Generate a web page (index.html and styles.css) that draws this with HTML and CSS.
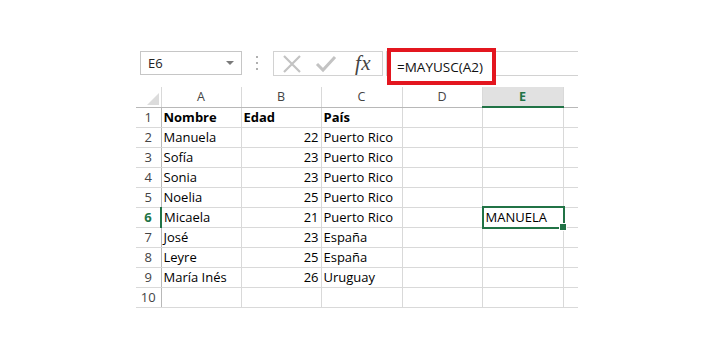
FILE: index.html
```html
<!DOCTYPE html>
<html lang="es">
<head>
  <meta charset="UTF-8" />
  <title>MAYUSC</title>
  <link rel="stylesheet" href="styles.css">
</head>
<body>
  <div class="sheet">
    <div class="toolbar">
      <div class="namebox">
        <span>E6</span>
        <span class="caret"></span>
      </div>
      <div class="grip"><i></i><i></i><i></i></div>
      <div class="fxbox">
        <svg class="ico" width="20" height="20" viewBox="0 0 20 20">
          <path d="M2 2 L18 18 M18 2 L2 18" stroke="#c3c3c3" stroke-width="2.2" fill="none" />
        </svg>
        <svg class="ico" width="22" height="20" viewBox="0 0 22 20">
          <path d="M2 10 L8 16 L20 3" stroke="#c3c3c3" stroke-width="3" fill="none" />
        </svg>
        <span class="fx">fx</span>
      </div>
      <div class="formula">
        <span class="formula-text">=MAYUSC(A2)</span>
      </div>
    </div>

    <table class="grid">
      <colgroup>
        <col class="c-hdr"><col class="c-80"><col class="c-80"><col class="c-81"><col class="c-80"><col class="c-81"><col class="c-rest">
      </colgroup>
      <thead>
        <tr>
          <th class="corner"><span class="tri"></span></th>
          <th>A</th><th>B</th><th>C</th><th>D</th><th class="active">E</th><th class="rest"></th>
        </tr>
      </thead>
      <tbody>
        <tr class="bold"><th>1</th><td>Nombre</td><td>Edad</td><td>País</td><td></td><td></td><td class="rest"></td></tr>
        <tr><th>2</th><td>Manuela</td><td class="num">22</td><td>Puerto Rico</td><td></td><td></td><td class="rest"></td></tr>
        <tr><th>3</th><td>Sofía</td><td class="num">23</td><td>Puerto Rico</td><td></td><td></td><td class="rest"></td></tr>
        <tr><th>4</th><td>Sonia</td><td class="num">23</td><td>Puerto Rico</td><td></td><td></td><td class="rest"></td></tr>
        <tr><th>5</th><td>Noelia</td><td class="num">25</td><td>Puerto Rico</td><td></td><td></td><td class="rest"></td></tr>
        <tr><th class="active">6</th><td>Micaela</td><td class="num">21</td><td>Puerto Rico</td><td></td><td class="sel">MANUELA</td><td class="rest"></td></tr>
        <tr><th>7</th><td>José</td><td class="num">23</td><td>España</td><td></td><td></td><td class="rest"></td></tr>
        <tr><th>8</th><td>Leyre</td><td class="num">25</td><td>España</td><td></td><td></td><td class="rest"></td></tr>
        <tr><th>9</th><td>María Inés</td><td class="num">26</td><td>Uruguay</td><td></td><td></td><td class="rest"></td></tr>
        <tr><th>10</th><td></td><td></td><td></td><td></td><td></td><td class="rest"></td></tr>
      </tbody>
    </table>
  </div>
</body>
</html>
```

FILE: styles.css
```css
* {
  box-sizing: border-box;
}

body {
  margin: 0;
  background: #ffffff;
  font-family: "Open Sans", "Liberation Sans", sans-serif;
  color: #000;
}

.sheet {
  padding: 48px 0 0 136px;
  width: 578px;
}

/* barra de fórmulas */
.toolbar {
  display: flex;
  align-items: flex-start;
  height: 39px;
}

.namebox {
  margin: 3px 0 0 4px;
  width: 102px;
  height: 24px;
  border: 1px solid #c6c6c6;
  display: flex;
  align-items: center;
  justify-content: space-between;
  padding: 0 7px 0 7px;
  font-size: 13px;
  color: #222;
}

.caret {
  width: 0;
  height: 0;
  border-left: 4px solid transparent;
  border-right: 4px solid transparent;
  border-top: 4px solid #7a7a7a;
}

.grip {
  margin: 6px 0 0 13px;
  width: 4px;
  display: flex;
  flex-direction: column;
  align-items: center;
  gap: 4px;
  padding-top: 2px;
}

.grip i {
  width: 2px;
  height: 2px;
  background: #b0b0b0;
}

.fxbox {
  margin: 3px 0 0 14px;
  width: 110px;
  height: 25px;
  border: 1px solid #d2d2d2;
  display: flex;
  align-items: center;
  padding-left: 8px;
  gap: 13px;
}

.fx {
  font-family: "Liberation Serif", "DejaVu Serif", serif;
  font-style: italic;
  font-size: 21px;
  color: #444;
  margin-left: 5px;
  line-height: 1;
  letter-spacing: 0.5px;
}

.formula {
  margin: 3px 0 0 3px;
  width: 192px;
  height: 25px;
  border: 1px solid #d2d2d2;
  border-right: none;
  display: flex;
  align-items: flex-start;
}

.formula-text {
  margin: -4px 0 0 0;
  width: 109px;
  height: 37px;
  border: 4px solid #e3161f;
  padding-left: 6px;
  display: flex;
  align-items: center;
  font-size: 13.5px;
  color: #111;
  background: #fff;
}

/* hoja */
.grid {
  border-collapse: collapse;
  table-layout: fixed;
  width: 442px;
  font-size: 13px;
}

.c-hdr { width: 25px; }
.c-80 { width: 80px; }
.c-81 { width: 81px; }
.c-rest { width: 15px; }

.grid th,
.grid td {
  height: 20px;
  padding: 0 2px;
  border: 1px solid #d9d9d9;
  white-space: nowrap;
  overflow: hidden;
  line-height: 18px;
}

.grid thead th {
  font-weight: normal;
  color: #444;
  font-size: 12.5px;
  border-top: none;
  border-bottom-color: #b8b8b8;
}

.grid tbody th {
  font-weight: normal;
  color: #444;
  font-size: 13px;
  text-align: center;
  border-left: none;
  border-right-color: #b8b8b8;
}

.grid .corner {
  position: relative;
  border-left: none;
}

.tri {
  position: absolute;
  right: 2px;
  bottom: 2px;
  width: 0;
  height: 0;
  border-left: 12px solid transparent;
  border-bottom: 12px solid #dcdcdc;
}

.grid thead th.active {
  background: #e1e1e1;
  color: #217346;
  font-weight: bold;
  border-bottom: 2px solid #217346;
}

.grid tbody th.active {
  color: #217346;
  font-weight: bold;
  border-right: 2px solid #217346;
}

.grid .rest {
  border-right: none;
}

.grid thead .rest {
  border-left-color: #d9d9d9;
}

.bold td {
  font-weight: bold;
}

.grid td.num {
  text-align: right;
}

.grid td.sel {
  position: relative;
  overflow: visible;
  padding-left: 3px;
}

.sel::after {
  content: "";
  position: absolute;
  left: -1px;
  top: -2px;
  right: -2px;
  bottom: -2px;
  border: 2px solid #217346;
}

.sel::before {
  content: "";
  position: absolute;
  right: -4px;
  bottom: -4px;
  width: 6px;
  height: 6px;
  background: #217346;
  border: 1px solid #fff;
  z-index: 2;
}
```
